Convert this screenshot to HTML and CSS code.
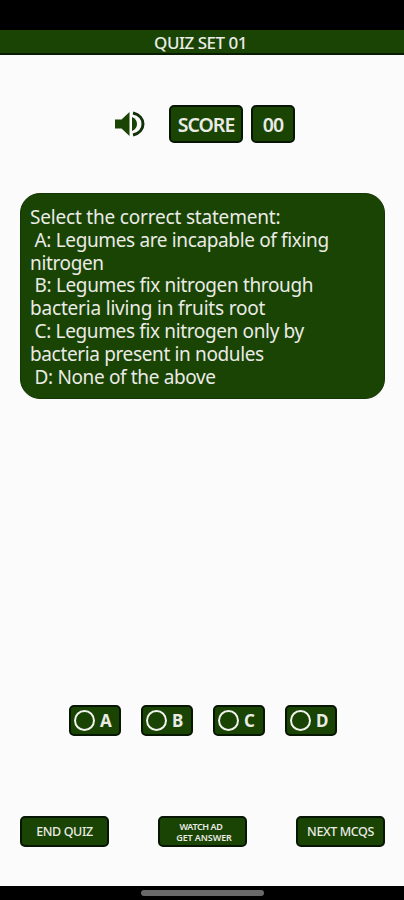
FILE: index.html
```
<!DOCTYPE html>
<html lang="en">
<head>
  <meta charset="UTF-8">
  <meta name="viewport" content="width=device-width, initial-scale=1.0">
  <title>Quiz Set 01</title>
  <link rel="stylesheet" href="styles.css">
</head>
<body>
  <div class="status"></div>
  <header class="title"><span>QUIZ SET 01</span></header>

  <div class="score-row">
    <svg class="sound" width="32" height="28" viewBox="0 0 32 28">
      <path class="speaker" d="M1 9.500h6.500l8-7.500v24l-8-7.500H1z"/>
      <path class="speaker" d="M18 7c3.500 1.500 5 4 5 7s-1.500 5.500-5 7z"/>
      <path class="wave" d="M19 3C25.500 4.500 29 9 29 14s-3.500 9.500-10 11"/>
    </svg>
    <div class="box score"><span>SCORE</span></div>
    <div class="box points"><span>00</span></div>
  </div>

  <main class="question">
    <p class="ask">Select the correct statement:</p>
    <p> A: Legumes are incapable of fixing</p>
    <p>nitrogen</p>
    <p> B: Legumes fix nitrogen through</p>
    <p class="fruits">bacteria living in fruits root</p>
    <p> C: Legumes fix nitrogen only by</p>
    <p>bacteria present in nodules</p>
    <p> D: None of the above</p>
  </main>

  <div class="options">
    <button class="box option"><i class="radio"></i><span>A</span></button>
    <button class="box option"><i class="radio"></i><span>B</span></button>
    <button class="box option"><i class="radio"></i><span>C</span></button>
    <button class="box option"><i class="radio"></i><span>D</span></button>
  </div>

  <div class="actions">
    <button class="box action end"><span>END QUIZ</span></button>
    <button class="box action ad"><span>WATCH AD</span><span class="answer">GET ANSWER</span></button>
    <button class="box action next"><span>NEXT MCQS</span></button>
  </div>

  <footer class="nav"><div class="handle"></div></footer>
</body>
</html>
```
FILE: styles.css
```
* {
  box-sizing: border-box;
}
html, body {
  margin: 0;
  padding: 0;
  height: 100%;
}
body {
  display: flex;
  flex-direction: column;
  background-color: #fbfbfb;
  color: #ebebe6;
  font-family: "Noto Sans", sans-serif;
  overflow: hidden;
}
.status {
  height: 30px;
  background-color: #000;
}
.title {
  height: 25px;
  display: flex;
  align-items: center;
  justify-content: center;
  background-color: #194404;
  border-bottom: 2px solid #081c02;
  font-size: 17px;
  font-weight: 500;
  line-height: 23px;
  letter-spacing: -0.5px;
}
.title span {
  margin-top: 2px;
  margin-right: 3px;
}
.score-row {
  display: flex;
  align-items: center;
  margin-top: 50px;
  padding-left: 114px;
}
.sound {
  margin-right: 23px;
}
.speaker {
  fill: #194404;
}
.wave {
  fill: none;
  stroke: #12300a;
  stroke-width: 3;
}
.box {
  display: flex;
  align-items: center;
  justify-content: center;
  padding: 0;
  background-color: #194404;
  border: 2px solid #071503;
  border-radius: 5px;
  color: #ebebe6;
  font-family: inherit;
  white-space: nowrap;
}
.score, .points {
  height: 38px;
  font-size: 19.5px;
  font-weight: 600;
  letter-spacing: -1px;
}
.score {
  width: 74px;
  margin-right: 8px;
}
.points {
  width: 44px;
}
.question {
  height: 206px;
  margin: 50px 19px 0 20px;
  padding: 12px 9px 0;
  background-color: #194404;
  border: 1px solid #143604;
  border-radius: 20px;
  font-size: 19px;
  line-height: 22.8px;
  letter-spacing: -0.36px;
}
.question p {
  margin: 0;
  white-space: pre;
}
.question .ask, .question .fruits {
  letter-spacing: -0.19px;
}
.options {
  display: flex;
  gap: 20px;
  margin: 306px 0 0 69px;
}
.option {
  width: 52px;
  height: 31px;
  gap: 5px;
  justify-content: flex-start;
  padding-left: 3px;
  font-size: 17px;
  font-weight: 700;
}
.radio {
  width: 21px;
  height: 21px;
  border: 2px solid #f2f2ee;
  border-radius: 50%;
}
.actions {
  display: flex;
  justify-content: space-between;
  margin: 80px 19px 0 20px;
}
.action {
  width: 89px;
  height: 31px;
  font-size: 12.5px;
  font-weight: 500;
  letter-spacing: -0.4px;
}
.ad {
  flex-direction: column;
  font-size: 9px;
  font-weight: 600;
  line-height: 11px;
}
.ad span {
  margin-right: 3px;
}
.ad .answer {
  margin: 0 0 0 3px;
  letter-spacing: -0.1px;
}
.nav {
  height: 14px;
  margin-top: auto;
  padding-top: 4px;
  background-color: #000;
}
.handle {
  width: 123px;
  height: 6px;
  margin: 0 auto;
  background-color: #696969;
  border-radius: 3px;
}
```
